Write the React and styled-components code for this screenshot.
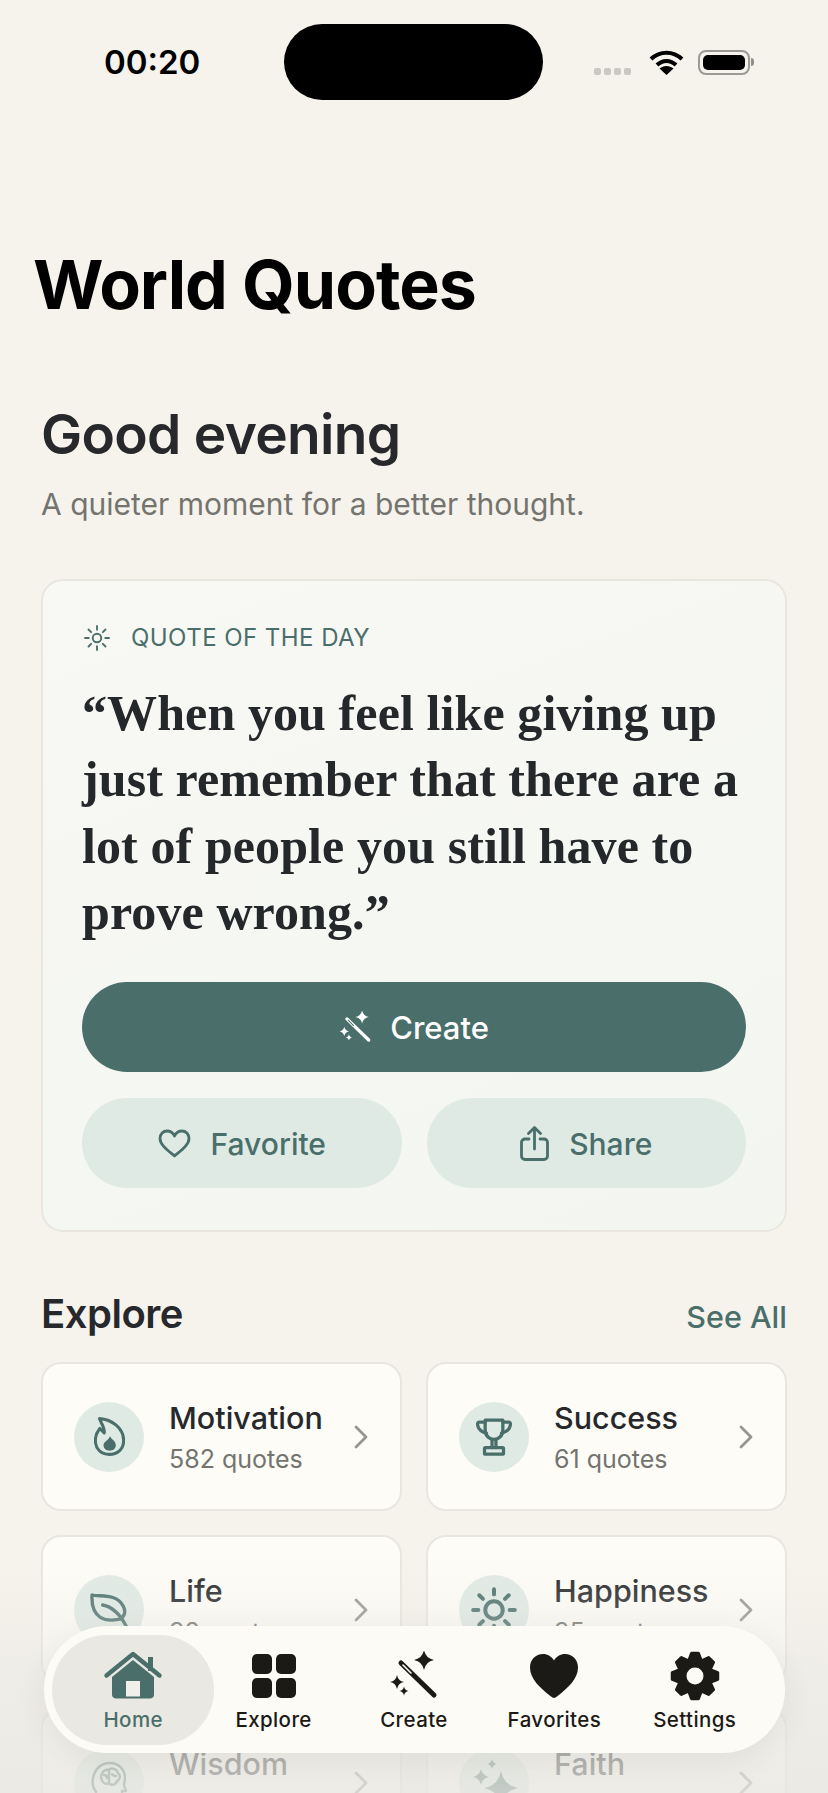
import React from 'react';
import styled, { createGlobalStyle } from 'styled-components';

const TEAL = '#4a6f6b';
const INK = '#1c1a17';

const GlobalStyle = createGlobalStyle`
  * { box-sizing: border-box; }
  html, body { margin: 0; padding: 0; background: #f6f3ec; }
  body { font-family: Inter, "Noto Sans", sans-serif; }
`;

// sparkle shape used by the wand and faith icons
const star = (x, y, r) => {
  const k = r * 0.16;
  return `M${x} ${y - r}Q${x + k} ${y - k} ${x + r} ${y}Q${x + k} ${y + k} ${x} ${y + r}Q${x - k} ${y + k} ${x - r} ${y}Q${x - k} ${y - k} ${x} ${y - r}Z`;
};

// gear outline with eight teeth
const gearPath = () => {
  const pts = [];
  for (let i = 0; i < 8; i++) {
    const a = (i * Math.PI) / 4;
    [[-0.36, 17], [-0.15, 23], [0.15, 23], [0.36, 17]].forEach(([d, r]) => {
      pts.push(`${(25 + r * Math.sin(a + d)).toFixed(2)} ${(25 - r * Math.cos(a + d)).toFixed(2)}`);
    });
  }
  return `M${pts.join('L')}Z`;
};

const SunIcon = ({ size, color, width = 2, ring = 5, from = 8, to = 11 }) => (
  <svg width={size} height={size} viewBox="0 0 24 24" fill="none" stroke={color} strokeWidth={width} strokeLinecap="round">
    <circle cx="12" cy="12" r={ring} />
    {[0, 45, 90, 135, 180, 225, 270, 315].map((deg) => (
      <line key={deg} x1="12" y1={12 - from} x2="12" y2={12 - to} transform={`rotate(${deg} 12 12)`} />
    ))}
  </svg>
);

const WandIcon = ({ size, color }) => (
  <svg width={size} height={size} viewBox="0 0 50 50" fill="none">
    <path d="M12 12L45 44" stroke={color} strokeWidth="5" strokeLinecap="round" />
    <path d="M14 14L22 22" stroke={color === INK ? '#fdfbf6' : TEAL} strokeWidth="1.6" strokeLinecap="round" />
    <path d={star(35, 9, 10)} fill={color} />
    <path d={star(8, 31, 7)} fill={color} />
    <path d={star(15, 40, 4.5)} fill={color} />
  </svg>
);

const HeartOutline = () => (
  <svg width="33" height="29" viewBox="0 0 33 29" fill="none" stroke={TEAL} strokeWidth="2.8" strokeLinejoin="round">
    <path d="M16.5 27C10 21.5 2 16 2 9.5C2 5 5.2 2 9 2C12.2 2 15 3.8 16.5 7C18 3.8 20.8 2 24 2C27.8 2 31 5 31 9.5C31 16 23 21.5 16.5 27Z" />
  </svg>
);

const ShareIcon = () => (
  <svg width="29" height="35" viewBox="0 0 29 35" fill="none" stroke={TEAL} strokeWidth="2.8" strokeLinecap="round" strokeLinejoin="round">
    <path d="M9 13H5C3 13 1.5 14.5 1.5 16.5V30C1.5 32 3 33.5 5 33.5H24C26 33.5 27.5 32 27.5 30V16.5C27.5 14.5 26 13 24 13H20" />
    <path d="M14.5 23V2M8.5 7.5L14.5 1.5L20.5 7.5" />
  </svg>
);

const Chevron = () => (
  <svg width="14" height="24" viewBox="0 0 14 24" fill="none" stroke="#96958f" strokeWidth="2.8" strokeLinecap="round" strokeLinejoin="round">
    <path d="M2 2L12 12L2 22" />
  </svg>
);

const FlameIcon = () => (
  <svg width="31" height="39" viewBox="0 0 91 113" fill="none" stroke={TEAL} strokeWidth="9" strokeLinejoin="round">
    <path d="M16 4C52 6 87 32 87 68C87 95 68 109 45 109C20 109 4 92 4 68C4 53 10 42 17 33L30 46C32 30 20 16 16 4Z" />
    <path d="M47 55C50 65 64 68 64 82C64 92 56 98 46 98C36 98 28 92 28 82C28 70 44 68 47 55Z" fill={TEAL} stroke="none" />
  </svg>
);

const TrophyIcon = () => (
  <svg width="36" height="38" viewBox="0 0 110 115" fill="none" stroke={TEAL} strokeWidth="10" strokeLinecap="round" strokeLinejoin="round">
    <path d="M28 6H82V35C82 55 68 65 55 65C42 65 28 55 28 35Z" />
    <path d="M28 12H9C4 12 4 18 6 25C9 37 18 42 32 46" />
    <path d="M82 12H101C106 12 106 18 104 25C101 37 92 42 78 46" />
    <path d="M49 66V90M61 66V90" />
    <rect x="26" y="90" width="58" height="20" rx="3" />
  </svg>
);

const LeafIcon = () => (
  <svg width="38" height="34" viewBox="0 0 114 102" fill="none" stroke={TEAL} strokeWidth="10" strokeLinecap="round" strokeLinejoin="round">
    <path d="M6 6C30 12 80 0 100 40C110 60 100 76 85 79C50 86 2 80 6 6Z" />
    <path d="M38 36C60 40 85 55 108 98" />
  </svg>
);

const BrainIcon = () => (
  <svg width="36" height="44" viewBox="0 0 36 44" fill="none" stroke={TEAL} strokeWidth="2.4" strokeLinecap="round" strokeLinejoin="round">
    <path d="M5 42V31C2 27 1 22 2 17C4 7 11 2 19 2C28 2 34 9 34 17C34 20 33 22 33 24L35 30H31V36C31 38 29 39 27 39H23V42" />
    <path d="M10 15C11 10 15 8 18 9C20 6 26 8 27 12C30 14 29 19 26 20C25 24 20 25 18 22C15 24 10 22 10 15ZM18 9V22M13 14C15 14 16 15 16 17M21 13C22 15 24 15 25 15" />
  </svg>
);

const FaithIcon = () => (
  <svg width="46" height="52" viewBox="0 0 46 52" fill={TEAL}>
    <path d={star(30, 31, 17)} />
    <path d={star(10, 20, 8)} />
    <path d={star(21, 7, 5)} />
  </svg>
);

const HomeIcon = () => (
  <svg width="60" height="50" viewBox="0 0 60 50" fill="none">
    <path d="M45 6H50V20H45Z" fill={TEAL} />
    <path d="M30 9L51 26V44C51 46 49 47.5 47 47.5H13C11 47.5 9 46 9 44V26Z" fill={TEAL} />
    <path d="M3.5 24.5L30 3L56.5 24.5" stroke={TEAL} strokeWidth="4.4" strokeLinecap="round" strokeLinejoin="round" />
    <rect x="23" y="30" width="14" height="15.5" fill="#f1efe9" />
  </svg>
);

const GridIcon = () => (
  <svg width="44" height="44" viewBox="0 0 44 44" fill={INK}>
    <rect x="0" y="0" width="20" height="20" rx="5" />
    <rect x="24" y="0" width="20" height="20" rx="5" />
    <rect x="0" y="24" width="20" height="20" rx="5" />
    <rect x="24" y="24" width="20" height="20" rx="5" />
  </svg>
);

const HeartSolid = () => (
  <svg width="48" height="44" viewBox="0 0 48 44" fill={INK}>
    <path d="M24 44C22.8 44 21.5 43 20 41.8C10 33.8 0 25 0 13.6C0 5.6 5.8 0 13 0C17.6 0 21.6 2.4 24 6.6C26.4 2.4 30.4 0 35 0C42.2 0 48 5.6 48 13.6C48 25 38 33.8 28 41.8C26.5 43 25.2 44 24 44Z" />
  </svg>
);

const GearIcon = () => (
  <svg width="50" height="50" viewBox="0 0 50 50">
    <path d={gearPath()} fill={INK} stroke={INK} strokeWidth="3" strokeLinejoin="round" />
    <circle cx="25" cy="25" r="8.5" fill="#fdfbf6" />
  </svg>
);

const WifiIcon = () => (
  <svg width="35" height="25" viewBox="0 0 35 25" fill="none" stroke="#000" strokeWidth="4">
    <path d="M2 9C11 0.5 24 0.5 33 9" />
    <path d="M8 15C13.5 9.5 21.5 9.5 27 15" />
    <path d="M17.5 25L10.5 18.5C14.5 15 20.5 15 24.5 18.5Z" fill="#000" stroke="none" />
  </svg>
);

const categories = [
  { name: 'Motivation', count: '582 quotes', icon: <FlameIcon /> },
  { name: 'Success', count: '61 quotes', icon: <TrophyIcon /> },
  { name: 'Life', count: '38 quotes', icon: <LeafIcon /> },
  { name: 'Happiness', count: '35 quotes', icon: <SunIcon size={50} color={TEAL} width={1.9} ring={4.2} from={7.5} to={10} /> },
  { name: 'Wisdom', count: '\u00a0', icon: <BrainIcon /> },
  { name: 'Faith', count: '\u00a0', icon: <FaithIcon /> },
];

const tabs = [
  { label: 'Home', icon: <HomeIcon />, active: true },
  { label: 'Explore', icon: <GridIcon /> },
  { label: 'Create', icon: <WandIcon size={50} color={INK} /> },
  { label: 'Favorites', icon: <HeartSolid /> },
  { label: 'Settings', icon: <GearIcon /> },
];

export default function App() {
  return (
    <Screen>
      <GlobalStyle />
      <StatusBar>
        <Time>00:20</Time>
        <Island />
        <StatusIcons>
          <Dots>
            <i /><i /><i /><i />
          </Dots>
          <WifiIcon />
          <Battery><BatteryFill /></Battery>
        </StatusIcons>
      </StatusBar>

      <Main>
        <Title>World Quotes</Title>
        <Greeting>Good evening</Greeting>
        <Tagline>A quieter moment for a better thought.</Tagline>

        <QuoteCard>
          <QuoteLabel>
            <SunIcon size={30} color={TEAL} width={1.5} ring={3.4} from={6.6} to={9.6} />
            <span>QUOTE OF THE DAY</span>
          </QuoteLabel>
          <QuoteText>
            “When you feel like giving up just remember that there are a lot of people you still have to prove wrong.”
          </QuoteText>
          <PrimaryButton>
            <WandIcon size={33} color="#ffffff" />
            Create
          </PrimaryButton>
          <ButtonRow>
            <SoftButton>
              <HeartOutline />
              Favorite
            </SoftButton>
            <SoftButton>
              <ShareIcon />
              Share
            </SoftButton>
          </ButtonRow>
        </QuoteCard>

        <SectionHead>
          <SectionTitle>Explore</SectionTitle>
          <SeeAll>See All</SeeAll>
        </SectionHead>

        <CategoryGrid>
          {categories.map((c) => (
            <CategoryCard key={c.name}>
              <IconCircle>{c.icon}</IconCircle>
              <CategoryText>
                <CategoryName>{c.name}</CategoryName>
                <CategoryCount>{c.count}</CategoryCount>
              </CategoryText>
              <Chevron />
            </CategoryCard>
          ))}
        </CategoryGrid>
      </Main>

      <BottomFade />
      <TabBar>
        {tabs.map((t) => (
          <Tab key={t.label} $active={t.active}>
            <TabIcon>{t.icon}</TabIcon>
            <TabLabel $active={t.active}>{t.label}</TabLabel>
          </Tab>
        ))}
      </TabBar>
    </Screen>
  );
}

const Screen = styled.div`
  position: relative;
  width: 828px;
  height: 1793px;
  overflow: hidden;
  background: #f6f3ec;
`;

const StatusBar = styled.div`
  display: grid;
  grid-template-columns: 284px 259px 1fr;
  padding-top: 24px;
  align-items: start;
`;

const Time = styled.div`
  padding: 19px 0 0 104px;
  font-size: 33px;
  line-height: 38px;
  font-weight: 600;
  color: #000;
`;

const Island = styled.div`
  height: 76px;
  border-radius: 38px;
  background: #000;
`;

const StatusIcons = styled.div`
  display: flex;
  align-items: flex-end;
  padding: 26px 0 0 51px;
`;

const Dots = styled.div`
  display: flex;
  gap: 3px;
  margin: 0 18px 0 0;
  i {
    width: 7px;
    height: 7px;
    border-radius: 2px;
    background: #c9c8c3;
  }
`;

const Battery = styled.div`
  position: relative;
  margin-left: 14px;
  width: 52px;
  height: 25px;
  padding: 3px;
  border: 2px solid #9a9994;
  border-radius: 8px;
  &::after {
    content: '';
    position: absolute;
    right: -6px;
    top: 6px;
    width: 3px;
    height: 8px;
    border-radius: 0 3px 3px 0;
    background: #8f8e8a;
  }
`;

const BatteryFill = styled.div`
  height: 100%;
  border-radius: 5px;
  background: #000;
`;

const Main = styled.main`
  padding: 0 41px;
`;

const Title = styled.h1`
  margin: 144px 0 0 -8px;
  font-size: 68px;
  line-height: 80px;
  font-weight: 700;
  letter-spacing: -1px;
  color: #000;
`;

const Greeting = styled.h2`
  margin: 78px 0 0;
  font-size: 55px;
  line-height: 64px;
  font-weight: 600;
  letter-spacing: -0.7px;
  color: #27282b;
`;

const Tagline = styled.p`
  margin: 19px 0 0;
  font-size: 30px;
  line-height: 38px;
  font-weight: 400;
  color: #74746f;
`;

const QuoteCard = styled.section`
  margin-top: 56px;
  height: 653px;
  padding: 42px 39px 0;
  border: 2px solid #e8e6df;
  border-radius: 22px;
  background: linear-gradient(160deg, #f8f8f4 0%, #f5f7f3 60%, #f3f6f0 100%);
`;

const QuoteLabel = styled.div`
  display: flex;
  align-items: center;
  gap: 19px;
  font-size: 24px;
  line-height: 30px;
  letter-spacing: 0.45px;
  color: ${TEAL};
`;

const QuoteText = styled.p`
  margin: 27px 0 0;
  font-family: "Liberation Serif", serif;
  font-size: 50px;
  line-height: 66.4px;
  font-weight: 700;
  letter-spacing: 0.1px;
  color: #25282b;
`;

const PrimaryButton = styled.div`
  display: flex;
  align-items: center;
  justify-content: center;
  gap: 18px;
  margin-top: 36px;
  padding-top: 2px;
  height: 90px;
  border-radius: 45px;
  background: ${TEAL};
  color: #fff;
  font-size: 31px;
  font-weight: 500;
`;

const ButtonRow = styled.div`
  display: grid;
  grid-template-columns: 1fr 1fr;
  gap: 25px;
  margin-top: 26px;
`;

const SoftButton = styled.div`
  display: flex;
  align-items: center;
  justify-content: center;
  gap: 20px;
  padding-top: 2px;
  height: 90px;
  border-radius: 45px;
  background: #e0eae5;
  color: ${TEAL};
  font-size: 30px;
  font-weight: 500;
`;

const SectionHead = styled.div`
  display: flex;
  align-items: center;
  justify-content: space-between;
  margin-top: 56px;
  height: 50px;
`;

const SectionTitle = styled.h3`
  margin: 0;
  font-size: 40px;
  font-weight: 600;
  letter-spacing: -0.5px;
  color: #27282b;
`;

const SeeAll = styled.span`
  margin-top: 6px;
  font-size: 30.5px;
  font-weight: 500;
  color: ${TEAL};
`;

const CategoryGrid = styled.div`
  display: grid;
  grid-template-columns: 1fr 1fr;
  gap: 24px;
  margin-top: 24px;
`;

const CategoryCard = styled.div`
  display: flex;
  align-items: center;
  height: 149px;
  padding: 0 32px 0 31px;
  border: 2px solid #e8e6df;
  border-radius: 20px;
  background: #fdfcf7;
`;

const IconCircle = styled.div`
  display: flex;
  align-items: center;
  justify-content: center;
  flex: none;
  width: 70px;
  height: 70px;
  border-radius: 50%;
  background: #e0eae5;
`;

const CategoryText = styled.div`
  flex: 1;
  margin-left: 25px;
`;

const CategoryName = styled.div`
  font-size: 30.5px;
  line-height: 38px;
  font-weight: 500;
  color: #26282b;
`;

const CategoryCount = styled.div`
  margin-top: 6px;
  font-size: 25px;
  line-height: 32px;
  color: #74746f;
`;

const BottomFade = styled.div`
  position: absolute;
  left: 0;
  right: 0;
  bottom: 0;
  height: 235px;
  background: linear-gradient(rgba(236, 235, 230, 0) 0%, rgba(232, 231, 226, 0.55) 55%, rgba(232, 231, 226, 0.78) 100%);
`;

const TabBar = styled.nav`
  position: absolute;
  left: 44px;
  top: 1626px;
  display: grid;
  grid-template-columns: repeat(5, 140.4px);
  width: 741px;
  height: 127px;
  padding: 0 19px;
  border-radius: 64px;
  background: #fdfbf6;
  box-shadow: 0 8px 30px rgba(60, 58, 50, 0.08);
`;

const Tab = styled.div`
  position: relative;
  display: flex;
  flex-direction: column;
  align-items: center;
  padding-top: 25px;
  &::before {
    content: ${(p) => (p.$active ? "''" : 'none')};
    position: absolute;
    left: -11px;
    right: -11px;
    top: 9px;
    bottom: 8px;
    border-radius: 55px;
    background: #eae8e2;
  }
`;

const TabIcon = styled.div`
  position: relative;
  display: flex;
  align-items: center;
  justify-content: center;
  height: 50px;
`;

const TabLabel = styled.span`
  position: relative;
  margin-top: 6px;
  font-size: 20.5px;
  line-height: 26px;
  font-weight: 500;
  letter-spacing: 0.4px;
  color: ${(p) => (p.$active ? TEAL : INK)};
`;
